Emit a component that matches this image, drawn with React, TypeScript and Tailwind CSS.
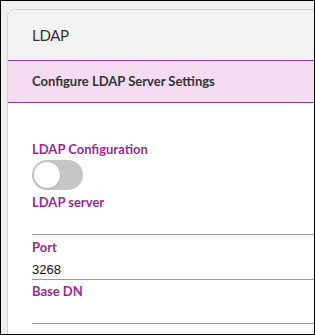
import { useState } from 'react';

const font = { fontFamily: 'Lato, "Noto Sans", sans-serif' };

function Field({ label, value }: { label: string; value?: string }) {
  return (
    <div className="flex flex-col">
      <label className="h-[20px] text-[13px] leading-[20px] font-bold text-[#9c2a9a]">{label}</label>
      <input
        readOnly
        value={value ?? ''}
        className="h-[23px] w-full border-b border-[#9a9a9a] bg-transparent pt-[3px] text-[13px] text-[#111] outline-none"
        style={{ fontFamily: '"Liberation Sans", Arial, sans-serif' }}
      />
    </div>
  );
}

export default function App() {
  const [enabled, setEnabled] = useState(false);

  return (
    <div className="h-[335px] w-[315px] overflow-hidden border border-black bg-[#f0f0f0]" style={font}>
      <div className="ml-[6px] mt-[8px] w-[380px] rounded-tl-lg border border-[#d2d2d2] bg-white">
        {/* Header */}
        <div className="flex h-[50px] items-center rounded-tl-lg bg-[#f2f2f2] px-6 text-[15px] tracking-[-0.3px] text-[#333]">
          LDAP
        </div>

        {/* Section band */}
        <div className="flex h-[43px] items-center border-y border-[#a23da0] bg-[#f4dbf1] px-6 text-[13px] font-bold text-[#333]">
          Configure LDAP Server Settings
        </div>

        {/* Body */}
        <div className="px-6 pt-[36px] pb-6">
          <div className="h-[20px] text-[13px] leading-[20px] font-bold text-[#9c2a9a]">LDAP Configuration</div>
          <button
            onClick={() => setEnabled(!enabled)}
            className={`mt-[1px] flex h-[30px] w-[51px] items-center rounded-full px-[2px] ${
              enabled ? 'justify-end bg-[#9c2a9a]' : 'justify-start bg-[#c6c6c6]'
            }`}
          >
            <span className="h-[26px] w-[26px] rounded-full bg-white shadow-sm" />
          </button>
          <div className="mt-[2px]">
            <Field label="LDAP server" />
          </div>
          <div className="mt-[2px]">
            <Field label="Port" value="3268" />
          </div>
          <div className="mt-[1px]">
            <Field label="Base DN" />
          </div>
        </div>
      </div>
    </div>
  );
}
